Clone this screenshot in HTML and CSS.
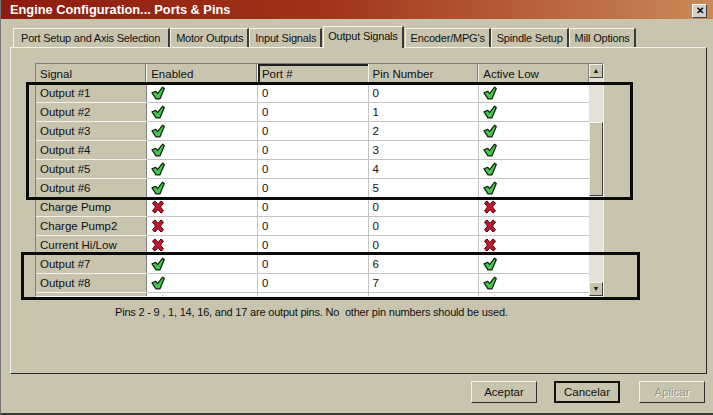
FILE: index.html
```html
<!DOCTYPE html>
<html lang="en">
<head>
  <meta charset="UTF-8">
  <meta name="viewport" content="width=device-width, initial-scale=1.0">
  <title>Engine Configuration... Ports &amp; Pins</title>
  <link rel="stylesheet" href="styles.css">
</head>
<body>
  <svg width="0" height="0" class="defs">
    <symbol id="chk" viewBox="0 0 14 14">
      <path d="M1 6.8 L4.8 5.4 L6.6 7.6 L11.6 1.2 L13.3 2.4 L9 12.8 L5 12.8 Z" fill="#46c84e" stroke="#062006" stroke-width="1.2" stroke-linejoin="round"/>
    </symbol>
    <symbol id="cross" viewBox="0 0 14 14">
      <path d="M1.5 3 L4 1 L7 4.5 L10 1 L12.5 3 L9.5 7 L12.5 11 L10 13 L7 9.5 L4 13 L1.5 11 L4.5 7 Z" fill="#c8142a" stroke="#3a0408" stroke-width="1" stroke-linejoin="round"/>
    </symbol>
  </svg>

  <div class="window">
    <div class="titlebar">
      <span class="title">Engine Configuration... Ports &amp; Pins</span>
      <button class="close">&#x2715;</button>
    </div>

    <div class="content">
      <div class="tabs">
        <div class="tab">Port Setup and Axis Selection</div>
        <div class="tab">Motor Outputs</div>
        <div class="tab">Input Signals</div>
        <div class="tab active">Output Signals</div>
        <div class="tab">Encoder/MPG's</div>
        <div class="tab">Spindle Setup</div>
        <div class="tab">Mill Options</div>
      </div>

      <div class="panel">
        <div class="gridframe">
          <div class="gridview">
            <table class="grid">
              <thead>
                <tr>
                  <th>Signal</th>
                  <th>Enabled</th>
                  <th class="focus">Port #</th>
                  <th>Pin Number</th>
                  <th>Active Low</th>
                </tr>
              </thead>
              <tbody id="rows"></tbody>
            </table>
          </div>
          <div class="scrollbar">
            <div class="sbtn">&#9650;</div>
            <div class="track">
              <div class="thumb"></div>
            </div>
            <div class="sbtn">&#9660;</div>
          </div>
        </div>
        <p class="note">Pins 2 - 9 , 1, 14, 16, and 17 are output pins. No &nbsp;other pin numbers should be used.</p>
      </div>

      <div class="actions">
        <button class="btn">Aceptar</button>
        <button class="btn default">Cancelar</button>
        <button class="btn" disabled>Aplicar</button>
      </div>
    </div>

    <div class="mark mark-top"></div>
    <div class="mark mark-bottom"></div>
  </div>

  <script>
    // last row is only peeking in at the bottom of the scroll area
    const signals = [
      ['Output #1', true, 0, 0, true],
      ['Output #2', true, 0, 1, true],
      ['Output #3', true, 0, 2, true],
      ['Output #4', true, 0, 3, true],
      ['Output #5', true, 0, 4, true],
      ['Output #6', true, 0, 5, true],
      ['Charge Pump', false, 0, 0, false],
      ['Charge Pump2', false, 0, 0, false],
      ['Current Hi/Low', false, 0, 0, false],
      ['Output #7', true, 0, 6, true],
      ['Output #8', true, 0, 7, true],
      ['', true, '', '', true]
    ];

    function icon(on) {
      const id = on ? 'chk' : 'cross';
      return '<svg class="icon" width="14" height="14"><use href="#' + id + '"/></svg>';
    }

    const rows = document.getElementById('rows');
    signals.forEach(s => {
      const tr = document.createElement('tr');
      tr.innerHTML =
        '<td class="name">' + s[0] + '</td>' +
        '<td>' + icon(s[1]) + '</td>' +
        '<td>' + s[2] + '</td>' +
        '<td>' + s[3] + '</td>' +
        '<td>' + icon(s[4]) + '</td>';
      rows.appendChild(tr);
    });
  </script>
</body>
</html>
```

FILE: styles.css
```css
body {
  margin: 0;
  background-color: #c8c4ae;
  font-family: "Liberation Sans", Arial, sans-serif;
  font-size: 11px;
  color: #111;
}

.defs {
  position: absolute;
}

.window {
  position: relative;
  width: 713px;
  height: 415px;
  box-sizing: border-box;
  border-bottom: 2px solid #3a3a3a;
  border-left: 1px solid #777;
  overflow: hidden;
}

.titlebar {
  height: 19px;
  background: linear-gradient(to right, #8c1c0e, #a23218 45%, #c98a58);
  display: flex;
  align-items: center;
  justify-content: space-between;
  padding: 0 6px 0 9px;
}

.title {
  color: #fff;
  font-weight: bold;
  font-size: 12.8px;
}

.close {
  width: 15px;
  height: 14px;
  padding: 0;
  margin-top: 3px;
  background-color: #d4d0c8;
  border: 1px solid;
  border-color: #fff #404040 #404040 #fff;
  font-size: 10px;
  font-weight: bold;
  line-height: 12px;
  color: #000;
}

.content {
  padding: 6px 6px 0 9px;
}

.tabs {
  display: flex;
  align-items: flex-end;
  height: 22px;
  padding-left: 3px;
}

.tab {
  height: 19px;
  box-sizing: border-box;
  padding: 3px 4px 0 5px;
  border-right: 2px solid #3a3a3a;
  border-top: 1px solid #f4f2ea;
  border-left: 1px solid #f4f2ea;
  font-size: 11px;
  letter-spacing: -0.2px;
  white-space: nowrap;
}

.tab:first-child {
  padding: 3px 8px 0 7px;
}

.tab.active {
  height: 22px;
  padding: 3px 4px 0 4px;
  margin: 0 1px;
  background-color: #c8c4ae;
  position: relative;
  top: 1px;
}

.panel {
  height: 327px;
  box-sizing: border-box;
  border: 1px solid;
  border-color: #f4f2ea #2a2a2a #2a2a2a #f4f2ea;
  padding: 15px 0 0 24px;
}

.gridframe {
  display: flex;
  width: 569px;
  height: 234px;
  box-sizing: border-box;
  border: 1px solid;
  border-color: #808080 #f4f2ea #f4f2ea #808080;
}

.gridview {
  width: 554px;
  overflow: hidden;
  background-color: #fff;
}

.grid {
  border-collapse: collapse;
  table-layout: fixed;
  width: 554px;
}

.grid th,
.grid td {
  height: 19px;
  box-sizing: border-box;
  padding: 1px 0 0 4px;
  text-align: left;
  font-weight: normal;
  font-size: 11.5px;
  white-space: nowrap;
  border: 1px solid #c4c4c4;
  border-top: none;
  border-left: none;
}

.grid th {
  background-color: #c8c4ae;
  border-right: 1px solid #f4f2ea;
  border-bottom: 1px solid #808080;
  box-shadow: inset -1px 0 0 #808080;
}

.grid th.focus {
  box-shadow: inset 2px 2px 0 #202020;
}

.grid td.name {
  background-color: #c8c4ae;
  border-right: 1px solid #808080;
  border-bottom: 1px solid #f4f2ea;
}

.icon {
  display: block;
}

.scrollbar {
  width: 14px;
  display: flex;
  flex-direction: column;
  background-color: #e4e2d8;
}

.sbtn {
  height: 14px;
  box-sizing: border-box;
  background-color: #c8c4ae;
  border: 1px solid;
  border-color: #f4f2ea #404040 #404040 #f4f2ea;
  font-size: 7px;
  line-height: 12px;
  text-align: center;
}

.track {
  flex: 1;
  padding-top: 44px;
}

.thumb {
  height: 74px;
  box-sizing: border-box;
  background-color: #c8c4ae;
  border: 1px solid;
  border-color: #f4f2ea #404040 #404040 #f4f2ea;
}

.note {
  margin: 9px 0 0 80px;
  font-size: 11px;
  letter-spacing: -0.2px;
}

.actions {
  display: flex;
  justify-content: flex-end;
  gap: 17px;
  padding: 7px 2px 0 0;
}

.btn {
  width: 66px;
  height: 22px;
  box-sizing: border-box;
  background-color: #c8c4ae;
  border: 1px solid;
  border-color: #f4f2ea #303030 #303030 #f4f2ea;
  font-family: "Liberation Sans", Arial, sans-serif;
  font-size: 11.5px;
  color: #111;
  padding: 0;
}

.btn.default {
  border: 2px solid #101010;
  margin-right: 2px;
}

.btn:disabled {
  color: #9a9888;
  text-shadow: 1px 1px 0 #f4f2ea;
}

/* annotation boxes drawn over the grid */
.mark {
  position: absolute;
  border: 3px solid #0a0a0a;
  pointer-events: none;
}

.mark-top {
  left: 25px;
  top: 82px;
  width: 601px;
  height: 112px;
}

.mark-bottom {
  left: 20px;
  top: 252px;
  width: 613px;
  height: 42px;
}
```
